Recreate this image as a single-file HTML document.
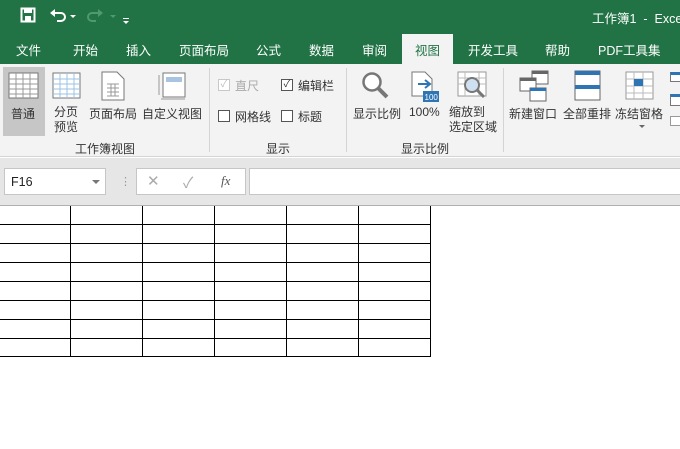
<!DOCTYPE html>
<html><head><meta charset="utf-8"><style>
*{margin:0;padding:0;box-sizing:border-box}
body{width:680px;height:449px;overflow:hidden;background:#fff;font-family:"Liberation Sans","Noto Sans CJK SC",sans-serif;font-size:12px;color:#222;position:relative}
.a{position:absolute}
.t{color:#fff;font-size:12.5px;top:40px}
.lbl{font-size:12px;color:#333;white-space:nowrap}
.h{height:1px;background:#000;left:0;width:430px}
.v{width:1px;background:#000;top:206px;height:151px}
</style></head><body>
<div class="a" style="left:0;top:0;width:680px;height:64px;background:#217346"></div>
<!-- QAT -->
<svg class="a" style="left:20px;top:7px" width="120" height="18">
<rect x="1.5" y="1.5" width="13" height="13" fill="none" stroke="#fff" stroke-width="2"/><rect x="4" y="2" width="8" height="4" fill="#fff"/><rect x="5" y="9" width="6" height="5" fill="#fff"/>
<path d="M33 6 h8 a4 4 0 0 1 0 8 h-4" fill="none" stroke="#fff" stroke-width="2"/><path d="M30 6 l5-4 v8z" fill="#fff"/>
<path d="M50 8 l3 3 3-3z" fill="#fff"/>
<path d="M80 6 h-8 a4 4 0 0 0 0 8 h4" fill="none" stroke="#4e9a6e" stroke-width="2"/><path d="M83 6 l-5-4 v8z" fill="#4e9a6e"/>
<path d="M90 8 l3 3 3-3z" fill="#4e9a6e"/>
<rect x="103" y="11" width="6" height="1" fill="#fff"/><path d="M103 14 l3 3 3-3z" fill="#fff"/>
</svg>
<div class="a" style="left:592px;top:8px;color:#fff;font-size:12.5px;white-space:nowrap">工作簿1 &nbsp;- &nbsp;Excel</div>
<!-- tabs -->
<div class="a t" style="left:16px">文件</div>
<div class="a t" style="left:73px">开始</div>
<div class="a t" style="left:126px">插入</div>
<div class="a t" style="left:179px">页面布局</div>
<div class="a t" style="left:256px">公式</div>
<div class="a t" style="left:309px">数据</div>
<div class="a t" style="left:362px">审阅</div>
<div class="a" style="left:402px;top:34px;width:51px;height:30px;background:#f3f3f3"></div>
<div class="a t" style="left:415px;color:#217346">视图</div>
<div class="a t" style="left:468px">开发工具</div>
<div class="a t" style="left:545px">帮助</div>
<div class="a t" style="left:598px">PDF工具集</div>
<!-- ribbon -->
<div class="a" style="left:0;top:64px;width:680px;height:93px;background:#f3f3f3;border-bottom:1px solid #d4d4d4"></div>
<div class="a" style="left:3px;top:67px;width:42px;height:69px;background:#c6c6c6"></div>
<svg class="a" style="left:8px;top:72px" width="32" height="28"><rect x="1" y="1" width="29" height="25" fill="#fff" stroke="#777"/><path d="M1 7h29M1 12h29M1 17h29M1 22h29M8 1v25M15 1v25M22 1v25" stroke="#999"/></svg>
<svg class="a" style="left:52px;top:72px" width="30" height="28"><rect x="1" y="1" width="27" height="25" fill="#fff" stroke="#777"/><path d="M1 7h27M1 12h27M1 17h27M1 22h27M8 1v25M15 1v25M22 1v25" stroke="#9cc3e6"/></svg>
<svg class="a" style="left:100px;top:71px" width="26" height="30"><path d="M2 1h15l7 7v21H2z" fill="#fff" stroke="#777"/><path d="M7 13h12M7 17h12M7 21h12M7 25h12M11 13v12M15 13v12" stroke="#999"/></svg>
<svg class="a" style="left:157px;top:70px" width="32" height="30"><rect x="6" y="3" width="22" height="24" fill="#fff" stroke="#777"/><rect x="9" y="7" width="16" height="5" fill="#a8c4e0"/><path d="M2 5v20M4 29h24" stroke="#999"/></svg>
<div class="a lbl" style="left:11px;top:105px">普通</div>
<div class="a lbl" style="left:54px;top:105px;line-height:15px">分页<br>预览</div>
<div class="a lbl" style="left:89px;top:105px">页面布局</div>
<div class="a lbl" style="left:142px;top:105px">自定义视图</div>
<div class="a lbl" style="left:75px;top:140px">工作簿视图</div>
<div class="a" style="left:209px;top:68px;width:1px;height:84px;background:#d4d4d4"></div>
<div class="a" style="left:218px;top:79px;width:12px;height:12px;border:1px solid #c8c8c8;background:#fff;color:#bbb;font-size:10px;line-height:10px;text-align:center">✓</div>
<div class="a lbl" style="left:235px;top:77px;color:#aaa">直尺</div>
<div class="a" style="left:281px;top:79px;width:12px;height:12px;border:1px solid #555;background:#fff;color:#333;font-size:10px;line-height:10px;text-align:center">✓</div>
<div class="a lbl" style="left:298px;top:77px">编辑栏</div>
<div class="a" style="left:218px;top:110px;width:12px;height:12px;border:1px solid #555;background:#fff"></div>
<div class="a lbl" style="left:235px;top:108px">网格线</div>
<div class="a" style="left:281px;top:110px;width:12px;height:12px;border:1px solid #555;background:#fff"></div>
<div class="a lbl" style="left:298px;top:108px">标题</div>
<div class="a lbl" style="left:266px;top:140px">显示</div>
<div class="a" style="left:346px;top:68px;width:1px;height:84px;background:#d4d4d4"></div>
<svg class="a" style="left:360px;top:71px" width="32" height="30"><circle cx="12" cy="11" r="8.5" fill="#fff" stroke="#777" stroke-width="2.5"/><path d="M18 17l9 9" stroke="#777" stroke-width="4"/></svg>
<svg class="a" style="left:410px;top:71px" width="32" height="32"><path d="M2 1h13l7 7v17H2z" fill="#fff" stroke="#777"/><path d="M8 13h11M15 9l5 4-5 4" stroke="#2e75b6" stroke-width="2" fill="none"/><rect x="13" y="20" width="16" height="11" fill="#2e75b6"/><text x="14.5" y="29" font-size="8" fill="#fff" font-family="Liberation Sans">100</text></svg>
<svg class="a" style="left:457px;top:71px" width="34" height="32"><rect x="1" y="1" width="28" height="24" fill="#fff" stroke="#999"/><path d="M1 7h28M1 13h28M8 1v24M22 1v24" stroke="#bbb"/><circle cx="15" cy="14" r="7" fill="#cfe0f0" stroke="#777" stroke-width="2"/><path d="M20 19l7 7" stroke="#777" stroke-width="3"/></svg>
<div class="a lbl" style="left:353px;top:105px">显示比例</div>
<div class="a lbl" style="left:409px;top:105px">100%</div>
<div class="a lbl" style="left:449px;top:105px;line-height:15px">缩放到<br>选定区域</div>
<div class="a lbl" style="left:401px;top:140px">显示比例</div>
<div class="a" style="left:503px;top:68px;width:1px;height:84px;background:#d4d4d4"></div>
<svg class="a" style="left:518px;top:70px" width="34" height="32"><rect x="14" y="1" width="16" height="13" fill="#fff" stroke="#666"/><rect x="14" y="1" width="16" height="3" fill="#666"/><rect x="2" y="8" width="16" height="13" fill="#fff" stroke="#666"/><rect x="2" y="8" width="16" height="3" fill="#666"/><rect x="12" y="18" width="16" height="13" fill="#fff" stroke="#666"/><rect x="12" y="18" width="16" height="3" fill="#2e75b6"/></svg>
<svg class="a" style="left:574px;top:70px" width="28" height="32"><rect x="1" y="1" width="25" height="29" fill="#fff" stroke="#666"/><rect x="1" y="1" width="25" height="4" fill="#2e75b6"/><rect x="1" y="15" width="25" height="4" fill="#2e75b6"/></svg>
<svg class="a" style="left:625px;top:71px" width="30" height="30"><rect x="1" y="1" width="27" height="27" fill="#fff" stroke="#999"/><path d="M1 8h27M1 15h27M1 22h27M9 1v27M18 1v27" stroke="#bbb"/><rect x="9" y="8" width="9" height="7" fill="#2e75b6"/></svg>
<div class="a lbl" style="left:509px;top:105px">新建窗口</div>
<div class="a lbl" style="left:563px;top:105px">全部重排</div>
<div class="a lbl" style="left:615px;top:105px">冻结窗格</div>
<div class="a" style="left:639px;top:125px;border:3px solid transparent;border-top:3px solid #666"></div>
<div class="a" style="left:670px;top:72px;width:12px;height:10px;border:1px solid #777;border-top:3px solid #2e75b6;background:#fff"></div>
<div class="a" style="left:670px;top:94px;width:12px;height:12px;border:1px solid #777;border-top:3px solid #2e75b6;background:#fff"></div>
<div class="a" style="left:670px;top:116px;width:12px;height:10px;border:1px solid #999;background:#fff"></div>
<!-- formula bar -->
<div class="a" style="left:0;top:158px;width:680px;height:48px;background:#e6e6e6;border-bottom:1px solid #b0b0b0"></div>
<div class="a" style="left:4px;top:168px;width:102px;height:27px;background:#fff;border:1px solid #c6c6c6"></div>
<div class="a" style="left:11px;top:175px;font-size:12.5px">F16</div>
<div class="a" style="left:92px;top:180px;border:4px solid transparent;border-top:4px solid #777"></div>
<div class="a" style="left:120px;top:175px;color:#999;font-size:11px">⋮</div>
<div class="a" style="left:136px;top:168px;width:110px;height:27px;background:#fff;border:1px solid #c6c6c6"></div>
<div class="a" style="left:147px;top:172px;color:#aaa;font-size:15px">✕</div>
<div class="a" style="left:183px;top:172px;color:#aaa;font-size:15px">✓</div>
<div class="a" style="left:221px;top:173px;color:#555;font-style:italic;font-family:'Liberation Serif',serif;font-size:13px">fx</div>
<div class="a" style="left:249px;top:168px;width:440px;height:27px;background:#fff;border:1px solid #c6c6c6"></div>
<!-- grid -->
<div class="a h" style="top:224px"></div><div class="a h" style="top:243px"></div><div class="a h" style="top:262px"></div><div class="a h" style="top:281px"></div><div class="a h" style="top:300px"></div><div class="a h" style="top:319px"></div><div class="a h" style="top:338px"></div><div class="a h" style="top:356px"></div>
<div class="a v" style="left:70px"></div><div class="a v" style="left:142px"></div><div class="a v" style="left:214px"></div><div class="a v" style="left:286px"></div><div class="a v" style="left:358px"></div><div class="a v" style="left:430px"></div>
</body></html>
